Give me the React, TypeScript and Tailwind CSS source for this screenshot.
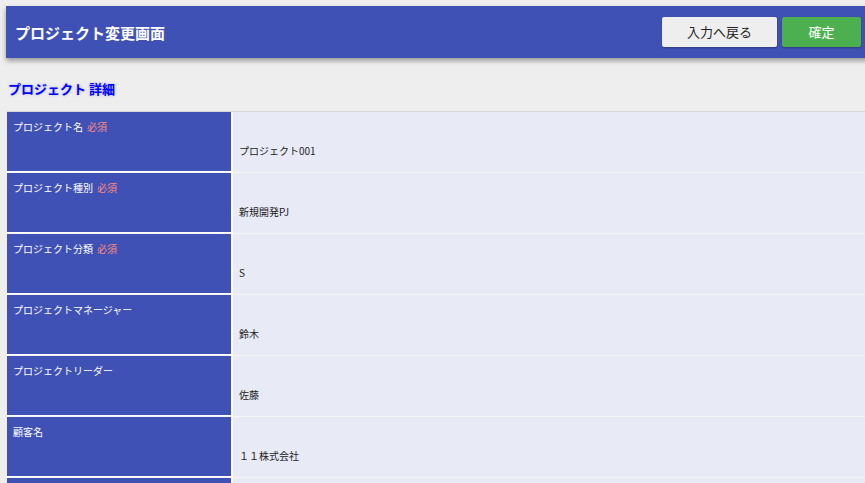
const rows = [
  { label: "プロジェクト名", required: true, value: "プロジェクト001" },
  { label: "プロジェクト種別", required: true, value: "新規開発PJ" },
  { label: "プロジェクト分類", required: true, value: "S" },
  { label: "プロジェクトマネージャー", required: false, value: "鈴木" },
  { label: "プロジェクトリーダー", required: false, value: "佐藤" },
  { label: "顧客名", required: false, value: "１１株式会社" },
  { label: "", required: false, value: "" },
];

export default function App() {
  return (
    <div
      className="w-[865px] h-[483px] overflow-hidden bg-[#eeeeee] pt-[6px] pl-[6px]"
      style={{ fontFamily: '"Noto Sans CJK JP", "Noto Sans", sans-serif' }}
    >
      {/* Header bar */}
      <div className="flex items-center justify-between h-[52px] w-[870px] bg-[#3f51b5] pl-[9px] pr-[9px] shadow-[0_3px_5px_rgba(0,0,0,0.35)]">
        <h1 className="text-white text-[15px] font-bold leading-none">プロジェクト変更画面</h1>
        <div className="flex gap-[5px] mr-[6px]">
          <button className="w-[115px] h-[30px] bg-[#eeeeee] text-[#222] text-[13px] rounded-[2px] shadow-[0_1px_2px_rgba(0,0,0,0.3)]">
            入力へ戻る
          </button>
          <button className="w-[79px] h-[30px] bg-[#4caf50] text-white text-[13px] rounded-[2px] shadow-[0_1px_2px_rgba(0,0,0,0.3)]">
            確定
          </button>
        </div>
      </div>

      {/* Section title */}
      <h2 className="mt-[24px] ml-[2px] text-[13px] font-bold text-[#0000ff] leading-none [text-shadow:0_0_3px_rgba(80,80,255,0.4)]">
        プロジェクト 詳細
      </h2>

      {/* Detail table */}
      <div className="mt-[16px] ml-[1px] border-t border-[#d6d6d6] w-[870px]">
        {rows.map((r, i) => (
          <div key={i} className="flex h-[61px] border-b border-[#f4f4f4]">
            <div className="w-[226px] bg-[#3f51b5] border-r-2 border-white border-b border-b-white pt-[7px] pl-[6px] text-white text-[10px] leading-[16px]">
              {r.label}
              {r.required && <span className="ml-[4px] text-[10px] text-[#ff8a80]">必須</span>}
            </div>
            <div className="flex-1 bg-[#e8eaf6] pl-[6px] pt-[31px] text-[10px] text-[#222] leading-[16px]">
              {r.value}
            </div>
          </div>
        ))}
      </div>
    </div>
  );
}
